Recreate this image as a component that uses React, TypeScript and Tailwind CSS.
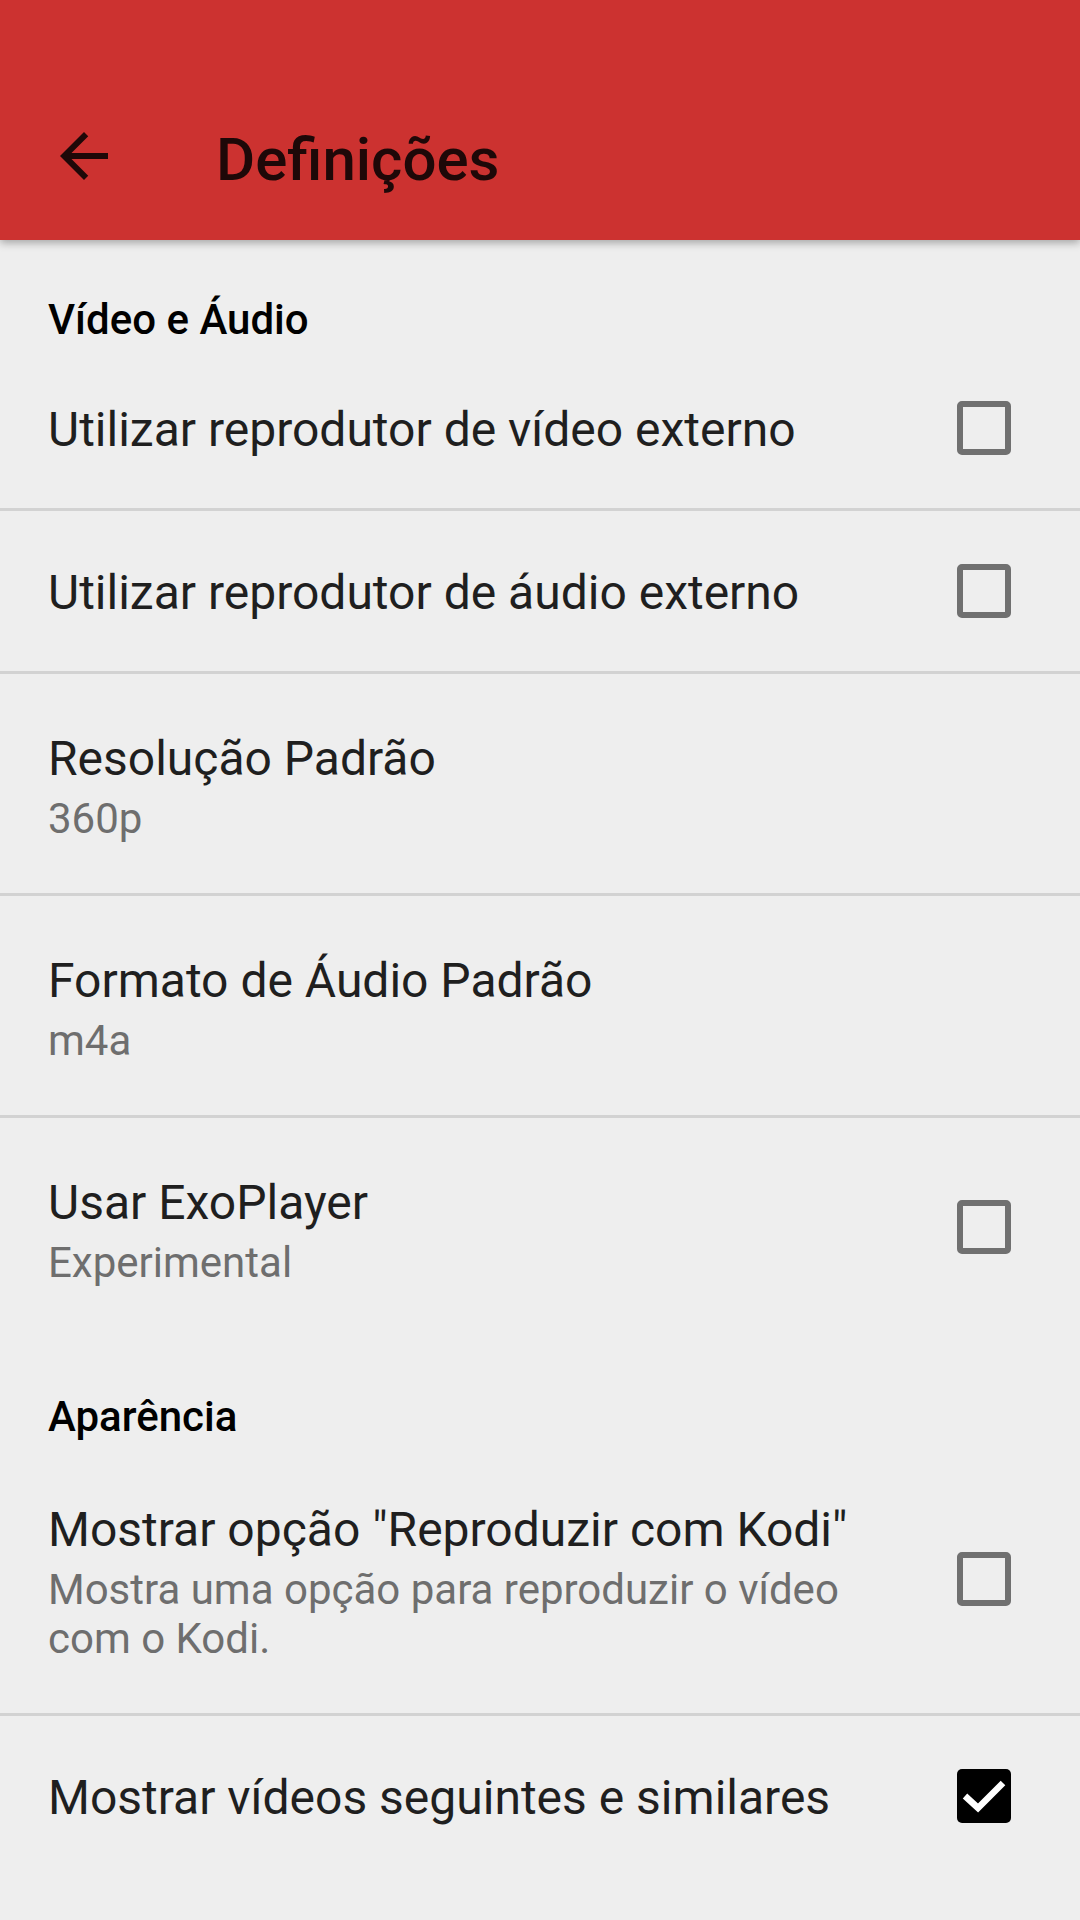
import React from "react";

type Pref = {
  title: string;
  summary?: string;
  checkbox?: boolean;
  checked?: boolean;
  divider?: boolean;
};

const videoAudio: Pref[] = [
  { title: "Utilizar reprodutor de vídeo externo", checkbox: true, divider: true },
  { title: "Utilizar reprodutor de áudio externo", checkbox: true, divider: true },
  { title: "Resolução Padrão", summary: "360p", divider: true },
  { title: "Formato de Áudio Padrão", summary: "m4a", divider: true },
  { title: "Usar ExoPlayer", summary: "Experimental", checkbox: true },
];

const appearance: Pref[] = [
  {
    title: 'Mostrar opção "Reproduzir com Kodi"',
    summary: "Mostra uma opção para reproduzir o vídeo com o Kodi.",
    checkbox: true,
    divider: true,
  },
  { title: "Mostrar vídeos seguintes e similares", checkbox: true, checked: true },
];

const CheckBox = ({ checked }: { checked?: boolean }) =>
  checked ? (
    <div className="w-[54px] h-[54px] rounded-[5px] bg-black">
      <svg viewBox="0 0 54 54" className="w-[54px] h-[54px]">
        <polyline
          points="8,27 21,39 46,14"
          fill="none"
          stroke="#fff"
          strokeWidth="6.5"
        />
      </svg>
    </div>
  ) : (
    <div className="w-[54px] h-[54px] rounded-[5px] border-[6px] border-[#707070]" />
  );

const Row = ({ pref }: { pref: Pref }) => (
  <div className={pref.divider ? "border-b-[3px] border-[#d2d2d2]" : ""}>
    <div
      className={
        "flex items-center px-[48px] " +
        (pref.summary ? "pt-[57px] pb-[50px]" : "pt-[54px] pb-[50px]")
      }
    >
      <div className="flex-1 min-w-0 pr-[48px]">
        <div className="text-[48px] leading-[56px] text-[#1f1f1f]">{pref.title}</div>
        {pref.summary && (
          <div className="mt-[7px] text-[42px] leading-[49px] text-[#6e6e6e]">
            {pref.summary}
          </div>
        )}
      </div>
      {/* checkbox sits a few px above the text's centre line */}
      <div className={"w-[96px] flex justify-center " + (pref.summary ? "-mt-[8px]" : "-mt-[4px]")}>
        {pref.checkbox && <CheckBox checked={pref.checked} />}
      </div>
    </div>
  </div>
);

const Category = ({ title }: { title: string }) => (
  <div className="px-[48px] pt-[55px] pb-[4px] text-[42px] leading-[49px] font-medium text-black">
    {title}
  </div>
);

export default function App() {
  return (
    <div className="w-[1080px] h-[1920px] overflow-hidden bg-[#eeeeee] font-['Roboto',sans-serif]">
      <div className="relative z-10 h-[240px] bg-[#cc3230] pt-[72px] shadow-[0_3px_8px_rgba(0,0,0,0.3)]">
        <div className="h-[168px] flex items-center">
          <div className="ml-[48px] w-[72px] h-[72px]">
            <svg viewBox="0 0 24 24" className="w-[72px] h-[72px]" fill="#1e0808">
              <path d="M20 11H7.83l5.59-5.59L12 4l-8 8 8 8 1.41-1.41L7.83 13H20v-2z" />
            </svg>
          </div>
          <div className="ml-[96px] pt-[7px] text-[60px] leading-[72px] font-medium text-[#1e0808]">
            Definições
          </div>
        </div>
      </div>
      <Category title="Vídeo e Áudio" />
      {videoAudio.map((p) => (
        <Row key={p.title} pref={p} />
      ))}
      <Category title="Aparência" />
      {appearance.map((p) => (
        <Row key={p.title} pref={p} />
      ))}
    </div>
  );
}
